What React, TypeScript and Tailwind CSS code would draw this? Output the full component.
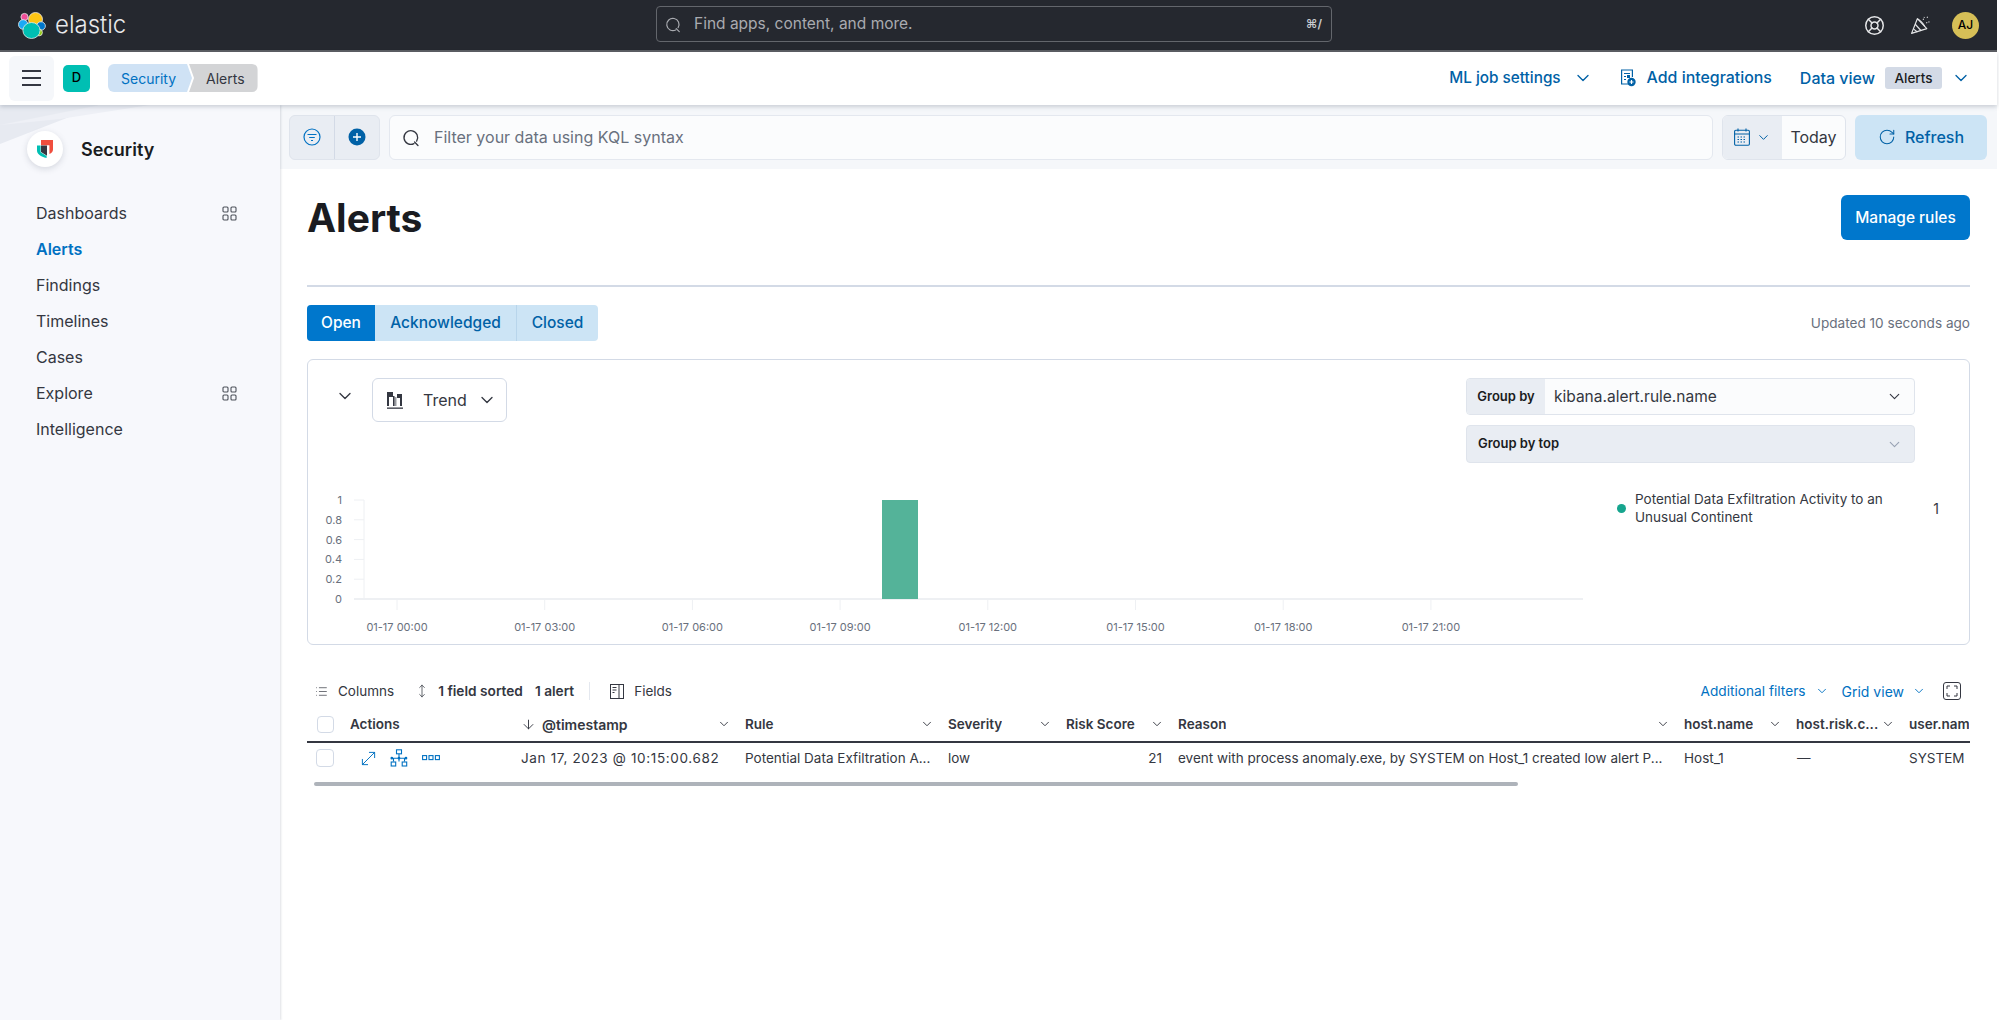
import { ChevronDown, LifeBuoy, List, MoveDiagonal, MoveVertical, RotateCw, ArrowDown } from "lucide-react";

const navItems = [
  { label: "Dashboards", grid: true },
  { label: "Alerts", active: true },
  { label: "Findings" },
  { label: "Timelines" },
  { label: "Cases" },
  { label: "Explore", grid: true },
  { label: "Intelligence" },
];

const gridCols = "grid grid-cols-[35px_171px_224px_203px_118px_112px_506px_112px_113px_68px]";

const xTicks = ["00:00", "03:00", "06:00", "09:00", "12:00", "15:00", "18:00", "21:00"];
const yTicks = ["1", "0.8", "0.6", "0.4", "0.2", "0"];

function Chev({ className = "" }: { className?: string }) {
  return <ChevronDown className={className} strokeWidth={1.6} />;
}

function SearchIcon({ className = "" }: { className?: string }) {
  return (
    <svg viewBox="0 0 20 20" fill="none" stroke="currentColor" strokeWidth="1.4" strokeLinecap="round" className={className}>
      <path d="M12.6 16.4A7.2 7.2 0 1 1 15.4 13.8" />
      <path d="M13.2 14.8l3.6 3.6" />
    </svg>
  );
}

function ElasticLogo() {
  return (
    <svg viewBox="0 0 28 27" className="h-[27px] w-[28px]">
      <circle cx="17.5" cy="7.5" r="7" fill="#fec514" stroke="#e8e8e8" strokeWidth="0.8" />
      <circle cx="6.5" cy="5" r="3.6" fill="#f04e98" stroke="#e8e8e8" strokeWidth="0.8" />
      <ellipse cx="5.2" cy="12.5" rx="4.7" ry="4.8" fill="#1ba9f5" stroke="#e8e8e8" strokeWidth="0.8" />
      <ellipse cx="23" cy="14" rx="4.4" ry="4.2" fill="#0077cc" stroke="#e8e8e8" strokeWidth="0.8" />
      <circle cx="21" cy="20.5" r="3.4" fill="#93c90e" stroke="#e8e8e8" strokeWidth="0.8" />
      <ellipse cx="13.5" cy="18.5" rx="8.6" ry="8" fill="#00bfb3" stroke="#e8e8e8" strokeWidth="0.8" />
    </svg>
  );
}

function SecurityLogo() {
  return (
    <svg viewBox="0 0 16 18" className="h-[18px] w-[16px]">
      <path d="M4 0h12v9.5c0 2.2-1.4 3.6-3.6 4.4V5.2H4z" fill="#f04e3e" />
      <path d="M0 5.6h3.6v6.6l6 3.8V18C3.6 16.4 0 14 0 10.4z" fill="#00bfb3" />
      <path d="M4 5.6h6v10.2L4 12z" fill="#343741" />
    </svg>
  );
}

function PartyHorn() {
  return (
    <svg viewBox="0 0 20 20" fill="none" stroke="#e5e6e8" strokeWidth="1.1" strokeLinejoin="round" className="ml-[25px] h-[21px] w-[21px]">
      <path d="M1.5 17.5L7 3.5l9 9.5z" />
      <path d="M5 8.8l5.6 6.2M3.2 13.2l3.8 3M7 3.5c2 .8 6 5 7 7.4" />
      <path d="M12.5 4.5l1.2-2.5M15.5 7.5l3-1M16.3 2.6l.5-1" strokeDasharray="1 1.2" />
    </svg>
  );
}

function AppGrid() {
  return (
    <svg viewBox="0 0 15 15" fill="none" stroke="#4c5059" strokeWidth="1.1" className="h-[15px] w-[15px]">
      <rect x="1" y="1" width="5" height="5" rx="1" />
      <rect x="9" y="1" width="5" height="5" rx="1" />
      <rect x="1" y="9" width="5" height="5" rx="1" />
      <rect x="9" y="9" width="5" height="5" rx="1" />
    </svg>
  );
}

function Chart() {
  return (
    <svg viewBox="310 463 1280 177" className="h-[177px] w-[1280px] shrink-0">
      {yTicks.map((t, i) => {
        const y = 500 + i * 19.8;
        return (
          <g key={t}>
            <line x1="354" x2="364" y1={y} y2={y} stroke="#eef0f3" strokeWidth="1" />
            <text x="342" y={y + 4} textAnchor="end" fontSize="11" fill="#69707d">{t}</text>
          </g>
        );
      })}
      <line x1="364" x2="364" y1="500" y2="599" stroke="#eef0f3" />
      <line x1="354" x2="1583" y1="599" y2="599" stroke="#eef0f3" strokeWidth="2" />
      {xTicks.map((t, i) => {
        const x = 397 + i * 147.7;
        return (
          <g key={t}>
            <line x1={x} x2={x} y1="600" y2="610" stroke="#eef0f3" />
            <text x={x} y="631" textAnchor="middle" fontSize="11" fill="#69707d">01-17 {t}</text>
          </g>
        );
      })}
      <rect x="882" y="500" width="36" height="99" fill="#54b399" />
    </svg>
  );
}

function HeaderCell({ label, chevron = true }: { label: string; chevron?: boolean }) {
  return (
    <div className="flex items-center justify-between px-2 min-w-0">
      <span className="truncate">{label}</span>
      {chevron && <Chev className="h-[14px] w-[14px] shrink-0 text-[#343741] -mr-[2px]" />}
    </div>
  );
}

export default function App() {
  return (
    <div className="h-[1020px] overflow-hidden bg-white pr-[2px] font-['Inter',sans-serif] text-[#343741]">
      {/* Global header */}
      <header className="relative flex h-[52px] items-center justify-between border-b-2 border-[#5b5d62] bg-[#25282f]">
        <div className="flex items-center gap-[9px] pl-[18px]">
          <ElasticLogo />
          <span className="text-[24px] font-light leading-none text-[#e8e9eb]">elastic</span>
        </div>
        <div className="absolute left-[656px] top-[6px] flex h-[36px] w-[676px] items-center rounded-[4px] border border-[#63666c] pl-[8px] pr-[9px]">
          <SearchIcon className="h-[17px] w-[17px] text-[#a9abb0]" />
          <span className="ml-[12px] text-[15.5px] text-[#a9abb0]">Find apps, content, and more.</span>
          <span className="ml-auto text-[12px] font-semibold text-[#c9cbd0]">⌘/</span>
        </div>
        <div className="flex items-center pr-[18px]">
          <LifeBuoy className="h-[21px] w-[21px] text-[#e5e6e8]" strokeWidth={1.7} />
          <PartyHorn />
          <div className="ml-[21px] flex h-[27px] w-[27px] items-center justify-center rounded-full bg-[#d6bf57] text-[12px] font-medium text-black">AJ</div>
        </div>
      </header>

      {/* App bar */}
      <div className="relative z-10 flex h-[53px] items-center justify-between bg-white pb-[1px] pl-[9px] pr-[26px] shadow-[0_2px_4px_rgba(80,90,110,0.25)]">
        <div className="flex items-center">
          <button className="flex h-[45px] w-[45px] flex-col items-center justify-center gap-[5px] rounded-[6px] bg-[#f5f7fa]">
            <span className="h-[2px] w-[19px] bg-[#343741]" />
            <span className="h-[2px] w-[19px] bg-[#343741]" />
            <span className="h-[2px] w-[19px] bg-[#343741]" />
          </button>
          <div className="ml-[9px] flex h-[27px] w-[27px] items-center justify-center rounded-[5px] bg-[#00bfb3] text-[13px] font-medium text-black">D</div>
          <div className="ml-[18px] flex h-[28px] text-[14px]">
            <div className="flex items-center rounded-l-[6px] bg-[#cfe2f5] pl-[13px] pr-[16px] text-[#0071c2] [clip-path:polygon(0_0,calc(100%-5px)_0,100%_50%,calc(100%-5px)_100%,0_100%)]">Security</div>
            <div className="-ml-[3px] flex items-center rounded-r-[6px] bg-[#d3d4d6] pl-[17px] pr-[13px] text-[#343741] [clip-path:polygon(0_0,100%_0,100%_100%,0_100%,5px_50%)]">Alerts</div>
          </div>
        </div>
        <div className="flex items-center text-[16px] font-medium text-[#0061a6]">
          <span className="text-[15.3px]">ML job settings</span>
          <Chev className="ml-[12px] h-[20px] w-[20px]" />
          <svg viewBox="0 0 16 18" fill="none" stroke="#0061a6" strokeWidth="1.2" className="ml-[27px] h-[18px] w-[16px]">
            <path d="M9 15H1.6V1h10.8v7" />
            <path d="M4 4.5h6M4 7.5h2M4 10.5h2" />
            <rect x="7" y="6" width="3" height="3" fill="#0061a6" stroke="none" />
            <circle cx="11.5" cy="13" r="4.2" fill="#0061a6" stroke="none" />
            <path d="M11.5 11v4M9.5 13h4" stroke="#fff" />
          </svg>
          <span className="ml-[11px] text-[15.9px]">Add integrations</span>
          <span className="ml-[28px]">Data view</span>
          <span className="ml-[10px] flex h-[22px] w-[57px] items-center justify-center rounded-[3px] bg-[#d3dae6] text-[13.5px] font-medium text-[#1a1c21]">Alerts</span>
          <Chev className="ml-[9px] h-[20px] w-[20px]" />
        </div>
      </div>

      <div className="flex h-[915px]">
        {/* Side nav */}
        <aside className="relative w-[280px] shrink-0 overflow-hidden bg-[#f7f8fc] shadow-[1px_0_2px_rgba(80,90,110,0.18)]">
          <svg viewBox="0 0 280 50" className="absolute left-0 top-0 h-[50px] w-[280px]">
            <path d="M0 0h100L0 39z" fill="#e7eaf1" />
            <path d="M0 20L100 0h50L60 14 0 20z" fill="#eef0f6" />
          </svg>
          <div className="relative flex items-center pl-[27px] pt-[26px]">
            <div className="flex h-[36px] w-[36px] items-center justify-center rounded-full bg-white shadow-[0_2px_6px_rgba(80,90,110,0.2)]">
              <SecurityLogo />
            </div>
            <span className="ml-[18px] text-[18px] font-semibold text-[#1a1c21]">Security</span>
          </div>
          <nav className="relative mt-[28px] flex flex-col pl-[36px] pr-[43px] text-[16px]">
            {navItems.map((item) => (
              <div key={item.label} className="flex h-[36px] items-center justify-between">
                <span className={item.active ? "font-semibold text-[#0071c2]" : "text-[#343741]"}>{item.label}</span>
                {item.grid && <AppGrid />}
              </div>
            ))}
          </nav>
        </aside>

        <main className="min-w-0 flex-1">
          {/* Query bar */}
          <div className="flex h-[64px] items-center gap-[9px] bg-[#f5f7fa] pl-[9px] pr-[10px]">
            <div className="flex h-[45px] w-[91px] overflow-hidden rounded-[6px] border border-[#dfe4ec] bg-[#e9edf3]">
              <div className="flex w-[45px] items-center justify-center border-r border-[#d3dae6]">
                <svg viewBox="0 0 18 18" fill="none" stroke="#0071c2" strokeWidth="1.2" className="h-[18px] w-[18px]">
                  <circle cx="9" cy="9" r="8" />
                  <path d="M4.5 6.5h9M6.2 9.5h5.6M8 12.5h2" />
                </svg>
              </div>
              <div className="flex flex-1 items-center justify-center">
                <svg viewBox="0 0 18 18" className="h-[18px] w-[18px]">
                  <circle cx="9" cy="9" r="8.5" fill="#0061a6" />
                  <path d="M9 5v8M5 9h8" stroke="#fff" strokeWidth="1.4" />
                </svg>
              </div>
            </div>
            <div className="flex h-[45px] flex-1 items-center rounded-[6px] border border-[#e4e8ef] bg-[#fbfcfd] pl-[12px]">
              <SearchIcon className="h-[19px] w-[19px] text-[#343741]" />
              <span className="ml-[13px] text-[16px] text-[#69707d]">Filter your data using KQL syntax</span>
            </div>
            <div className="flex h-[45px] w-[124px] overflow-hidden rounded-[6px] border border-[#dfe4ec] bg-[#fbfcfd]">
              <div className="flex w-[59px] items-center justify-start gap-[6px] bg-[#e9edf3] pl-[11px]">
                <svg viewBox="0 0 16 18" fill="none" stroke="#0061a6" strokeWidth="1.1" className="h-[18px] w-[16px]">
                  <rect x="0.6" y="2.2" width="14.8" height="15" rx="1.2" />
                  <path d="M0.6 6h14.8M4 0.5v3M12 0.5v3" />
                  <path d="M3.5 9h9M3.5 11.5h9M3.5 14h9" strokeDasharray="1.5 1.5" />
                </svg>
                <Chev className="h-[15px] w-[15px] text-[#0061a6]" />
              </div>
              <span className="flex flex-1 items-center justify-center text-[16px] text-[#343741]">Today</span>
            </div>
            <button className="flex h-[45px] w-[132px] items-center justify-center gap-[9px] rounded-[6px] bg-[#cce4f5] text-[16px] font-medium text-[#0061a6]">
              <RotateCw className="h-[18px] w-[18px]" strokeWidth={1.4} />
              Refresh
            </button>
          </div>

          <div className="px-[27px]">
            <div className="flex h-[71px] items-start justify-between pt-[26px]">
              <h1 className="text-[39px] font-bold leading-[45px] text-[#1a1c21]">Alerts</h1>
              <button className="flex h-[45px] w-[129px] items-center justify-center rounded-[6px] bg-[#0077cc] pt-[1px] text-[15.5px] font-medium text-white">Manage rules</button>
            </div>
            <div className="mt-[45px] h-[2px] bg-[#d3dae6]" />

            <div className="mt-[18px] flex items-center justify-between">
              <div className="flex h-[36px] overflow-hidden rounded-[4px] bg-[#cce4f5] text-[15.5px] font-medium text-[#0061a6]">
                <span className="flex w-[68px] items-center justify-center bg-[#0077cc] text-white">Open</span>
                <span className="flex w-[142px] items-center justify-center border-r border-[#b8d5eb]">Acknowledged</span>
                <span className="flex w-[81px] items-center justify-center">Closed</span>
              </div>
              <span className="text-[13.6px] text-[#69707d]">Updated 10 seconds ago</span>
            </div>

            {/* Histogram panel */}
            <section className="mt-[18px] h-[286px] rounded-[6px] border border-[#d3dae6] bg-white pl-[2px]">
              <div className="flex pr-[54px] pt-[18px]">
                <div className="flex flex-1 items-start">
                  <Chev className="ml-[25px] mt-[8px] h-[20px] w-[20px]" />
                  <div className="ml-[17px] flex h-[44px] w-[135px] items-center rounded-[6px] border border-[#d3dae6] pl-[14px]">
                    <svg viewBox="0 0 16 18" className="h-[18px] w-[16px]" fill="#343741">
                      <rect x="0" y="1" width="2" height="14" />
                      <rect x="2" y="1" width="4" height="5" />
                      <rect x="6" y="5" width="1.5" height="10" />
                      <rect x="7.5" y="6" width="2" height="9" fillOpacity="0.5" />
                      <rect x="10" y="3" width="5" height="4" />
                      <rect x="13" y="7" width="2" height="8" />
                      <rect x="0" y="16.5" width="16" height="1.3" />
                    </svg>
                    <span className="ml-[20px] text-[16px]">Trend</span>
                    <Chev className="ml-[10px] h-[20px] w-[20px]" />
                  </div>
                </div>
                <div className="flex w-[449px] flex-col gap-[10px]">
                  <div className="flex h-[37px] overflow-hidden rounded-[4px] border border-[#dfe4ec] bg-[#fbfcfd]">
                    <span className="flex w-[78px] items-center justify-center bg-[#e9edf3] text-[13px] font-semibold text-[#1a1c21]">Group by</span>
                    <span className="flex flex-1 items-center pl-[9px] pt-[1px] text-[15.5px] text-[#343741]">kibana.alert.rule.name</span>
                    <Chev className="mr-[11px] mt-[9px] h-[17px] w-[17px]" />
                  </div>
                  <div className="flex h-[38px] overflow-hidden rounded-[4px] border border-[#dfe4ec] bg-[#e9edf3]">
                    <span className="flex w-[103px] items-center justify-center text-[13px] font-semibold text-[#1a1c21]">Group by top</span>
                    <span className="flex-1" />
                    <Chev className="mr-[11px] mt-[10px] h-[17px] w-[17px] text-[#98a2b3]" />
                  </div>
                </div>
              </div>
              <div className="flex items-start">
                <Chart />
                <div className="ml-[27px] mt-[27px] flex w-[322px] items-center">
                  <span className="h-[9px] w-[9px] shrink-0 rounded-full bg-[#16a58e]" />
                  <span className="ml-[9px] w-[262px] text-[13.5px] leading-[18px]">Potential Data Exfiltration Activity to an Unusual Continent</span>
                  <span className="ml-[40px] text-[14px]">1</span>
                </div>
              </div>
            </section>

            {/* Toolbar */}
            <div className="mt-[33px] flex h-[26px] items-center text-[13.5px]">
              <List className="ml-[8px] h-[13px] w-[13px]" strokeWidth={1.3} />
              <span className="ml-[10px]">Columns</span>
              <MoveVertical className="ml-[21px] h-[14px] w-[14px]" strokeWidth={1.3} />
              <span className="ml-[9px] text-[13.7px] font-semibold">1 field sorted</span>
              <span className="ml-[12px] text-[13.7px] font-semibold">1 alert</span>
              <span className="ml-[15px] h-[18px] w-px bg-[#e4e8ef]" />
              <svg viewBox="0 0 14 15" fill="none" stroke="#343741" strokeWidth="1" className="ml-[20px] h-[15px] w-[14px]">
                <rect x="0.5" y="0.5" width="13" height="14" />
                <path d="M9 0.5v14M2.5 3.5h4M2.5 6h4M2.5 8.5h2" />
              </svg>
              <span className="ml-[10px]">Fields</span>
              <div className="ml-auto flex items-center text-[14px] text-[#0071c2]">
                <span className="text-[13.7px]">Additional filters</span>
                <Chev className="ml-[9px] h-[14px] w-[14px]" />
                <span className="ml-[13px]">Grid view</span>
                <Chev className="ml-[8px] h-[14px] w-[14px]" />
                <span className="ml-[17px] mr-[9px] flex h-[18px] w-[18px] items-center justify-center rounded-[3px] border border-[#343741]">
                  <svg viewBox="0 0 12 12" fill="none" stroke="#343741" strokeWidth="1" className="h-[12px] w-[12px]">
                    <path d="M1 4V1h3M8 1h3v3M11 8v3H8M4 11H1V8" />
                  </svg>
                </span>
              </div>
            </div>

            {/* Alerts table */}
            <div className="mt-[7px] overflow-hidden">
              <div className={`${gridCols} h-[32px] items-center border-b-2 border-[#343741] pb-[4px] text-[13.5px] font-semibold`}>
                <div className="flex justify-center pl-[1px]">
                  <span className="h-[17px] w-[17px] rounded-[4px] border border-[#d3dae6] bg-white" />
                </div>
                <HeaderCell label="Actions" chevron={false} />
                <div className="flex items-center justify-between px-2">
                  <span className="flex items-center gap-[6px] text-[14px]">
                    <ArrowDown className="h-[15px] w-[15px]" strokeWidth={1.5} />
                    @timestamp
                  </span>
                  <Chev className="-mr-[2px] h-[14px] w-[14px]" />
                </div>
                <HeaderCell label="Rule" />
                <HeaderCell label="Severity" />
                <HeaderCell label="Risk Score" />
                <HeaderCell label="Reason" />
                <HeaderCell label="host.name" />
                <HeaderCell label="host.risk.c..." />
                <div className="overflow-hidden whitespace-nowrap pl-2">user.name</div>
              </div>
              <div className={`${gridCols} h-[30px] items-center text-[13.5px]`}>
                <div className="flex justify-center pl-[1px]">
                  <span className="h-[18px] w-[18px] rounded-[4px] border border-[#d3dae6] bg-white" />
                </div>
                <div className="flex items-center pl-[16px] text-[#0071c2]">
                  <MoveDiagonal className="h-[21px] w-[21px]" strokeWidth={1.1} />
                  <svg viewBox="0 0 18 18" fill="none" stroke="currentColor" strokeWidth="1.1" className="ml-[11px] h-[18px] w-[18px]">
                    <rect x="6.5" y="0.8" width="5" height="4" />
                    <path d="M9 5v5M1.5 9.2h15M3.5 9.5v3M14.5 9.5v3M9 9.5v3" />
                    <circle cx="1.8" cy="9.2" r="0.8" fill="currentColor" />
                    <circle cx="9" cy="9.2" r="0.8" fill="currentColor" />
                    <circle cx="16" cy="9.2" r="0.8" fill="currentColor" />
                    <rect x="1.2" y="13" width="4.5" height="4" />
                    <rect x="12.2" y="13" width="4.5" height="4" />
                  </svg>
                  <svg viewBox="0 0 18 6" fill="none" stroke="currentColor" strokeWidth="1.1" className="ml-[14px] h-[6px] w-[18px]">
                    <rect x="0.6" y="0.6" width="4" height="4" />
                    <rect x="7" y="0.6" width="4" height="4" />
                    <rect x="13.4" y="0.6" width="4" height="4" />
                  </svg>
                </div>
                <div className="px-2 tracking-[0.65px] whitespace-nowrap">Jan 17, 2023 @ 10:15:00.682</div>
                <div className="px-2 whitespace-nowrap">Potential Data Exfiltration A...</div>
                <div className="px-2">low</div>
                <div className="px-2 text-right">21</div>
                <div className="px-2 whitespace-nowrap">event with process anomaly.exe, by SYSTEM on Host_1 created low alert P...</div>
                <div className="px-2">Host_1</div>
                <div className="pl-[9px]">—</div>
                <div className="pl-2">SYSTEM</div>
              </div>
              <div className="ml-[7px] mt-[9px] h-[4px] w-[1204px] rounded-full bg-[#aeb3ba]" />
            </div>
          </div>
        </main>
      </div>
    </div>
  );
}
